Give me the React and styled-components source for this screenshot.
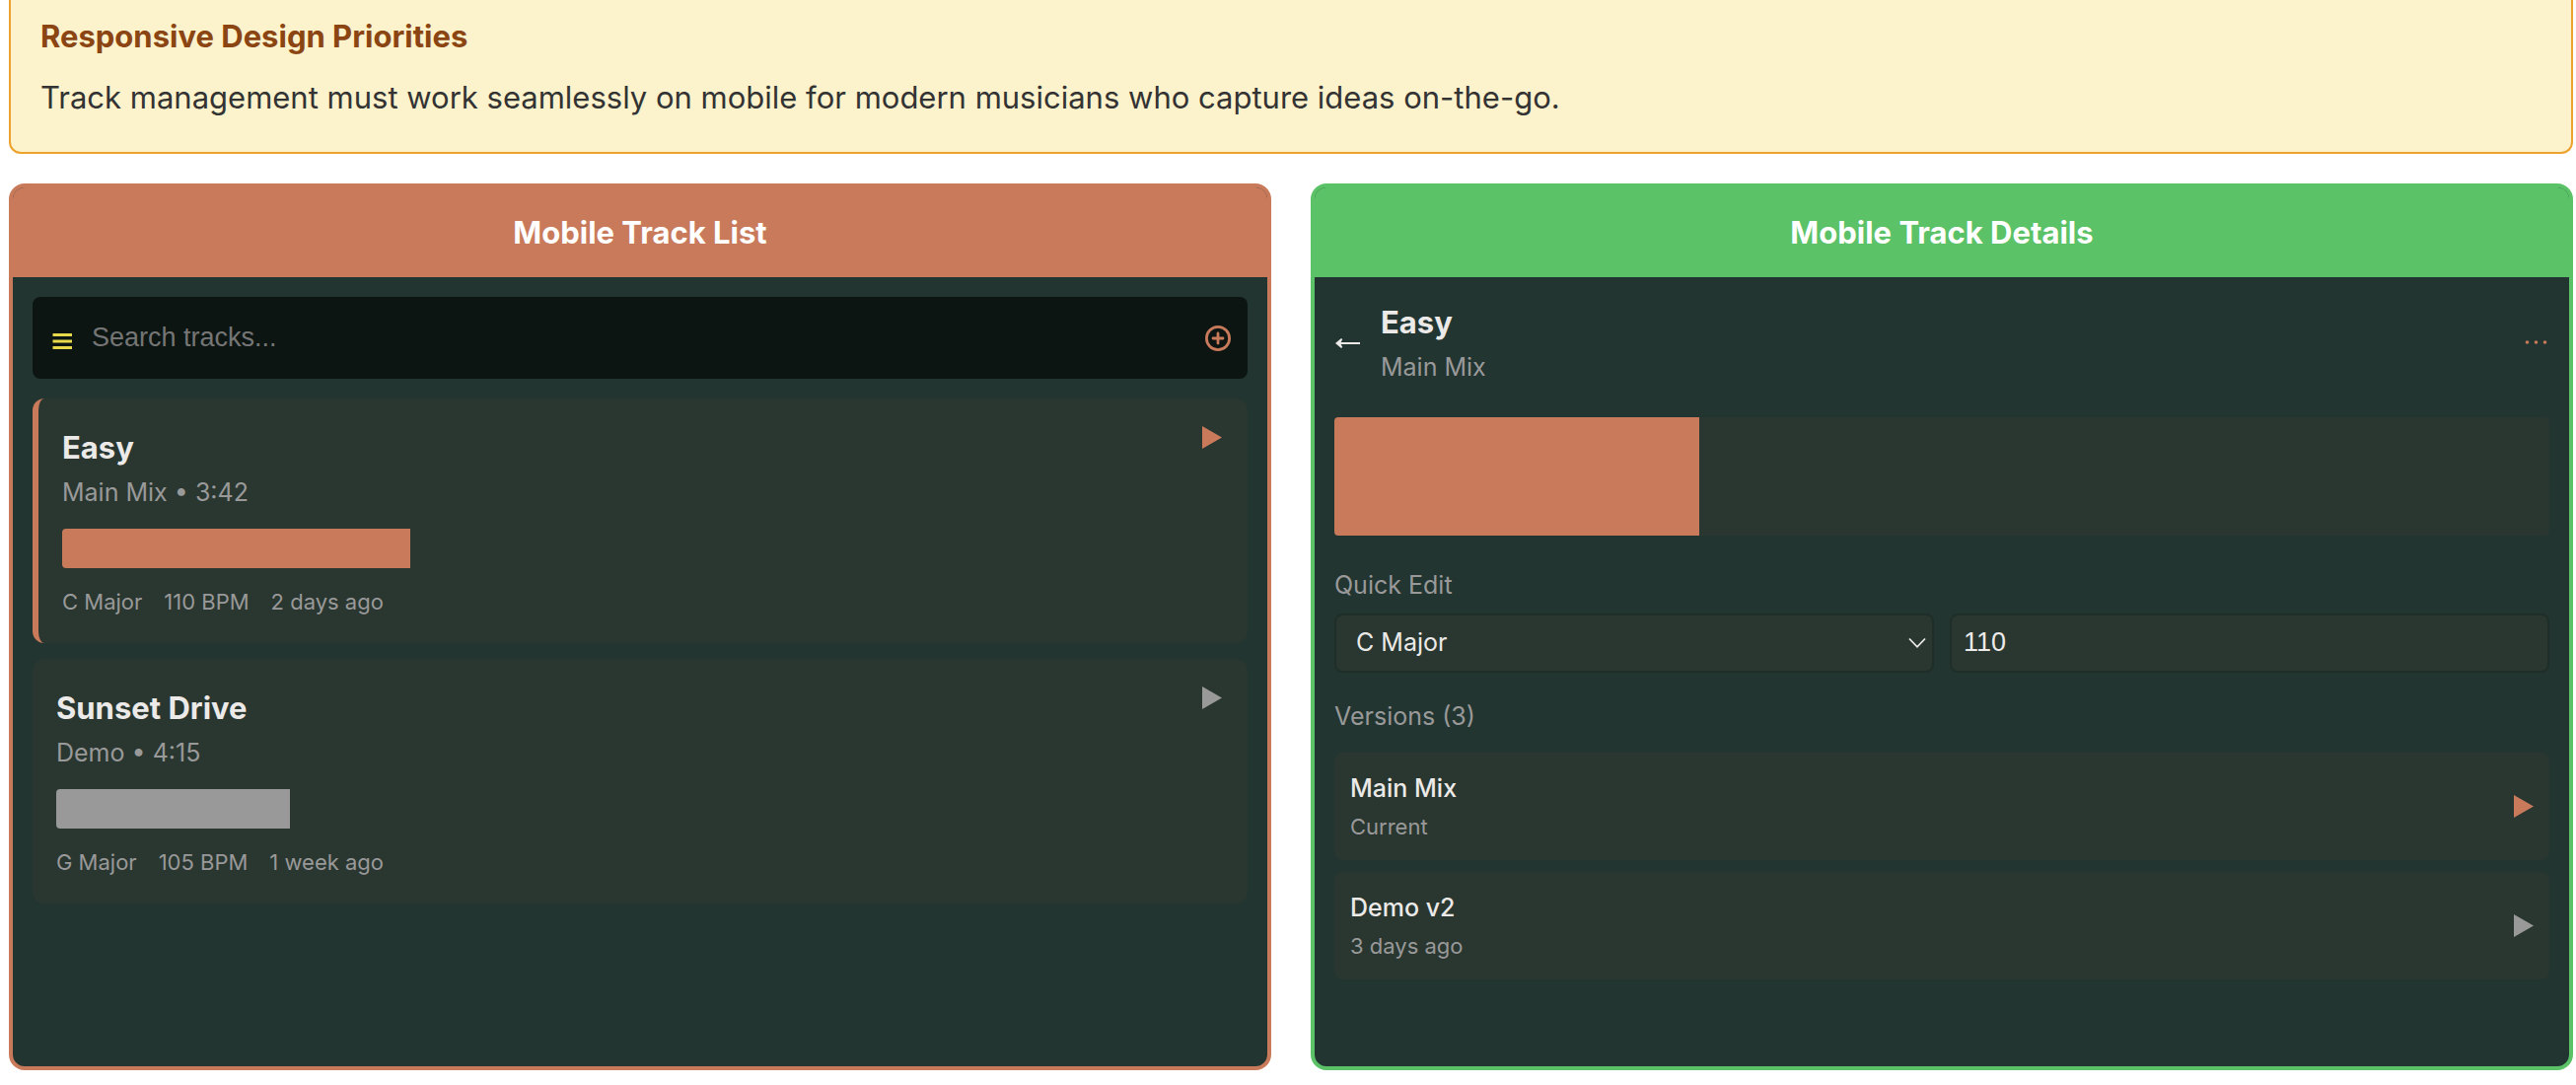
import React from "react";
import styled, { createGlobalStyle } from "styled-components";

const color = {
  accent: "#c87a5b",
  success: "#5bc267",
  panel: "#223531",
  card: "#293730",
  field: "#0c1512",
  fieldBorder: "#1f2e28",
  text: "#eceae8",
  muted: "#999999",
  highlight: "#e8d94a",
};

const GlobalStyle = createGlobalStyle`
  * {
    box-sizing: border-box;
  }

  body {
    margin: 0;
    background: #ffffff;
    color: #333333;
    font-family: Inter, "Liberation Sans", sans-serif;
    font-size: 31px;
    line-height: 51px;
  }

  h2, h3, p, ul {
    margin: 0;
    padding: 0;
  }
`;

const Page = styled.main`
  display: flex;
  flex-direction: column;
  gap: 30px;
  padding: 0 3px 12px 9px;
`;

const Callout = styled.section`
  display: flex;
  flex-direction: column;
  gap: 11px;
  padding: 11px 30px 30px;
  background: #fcf2cb;
  border: 2px solid #eda22d;
  border-top: 0;
  border-radius: 0 0 12px 12px;
`;

const CalloutTitle = styled.h2`
  color: #8b4513;
  font-size: 31px;
  font-weight: 700;
`;

const Columns = styled.div`
  display: grid;
  grid-template-columns: 1fr 1fr;
  gap: 40px;
`;

const Panel = styled.section`
  overflow: hidden;
  background: ${color.panel};
  border: 4px solid ${(p) => p.$tone};
  border-radius: 16px;
`;

const PanelTitle = styled.h2`
  padding: 20px;
  background: ${(p) => p.$tone};
  color: #ffffff;
  font-size: 31px;
  font-weight: 700;
  text-align: center;
`;

const PanelBody = styled.div`
  min-height: 800px;
  padding: 20px;
`;

const IconButton = styled.button`
  display: flex;
  flex: none;
  margin: 0;
  padding: 0;
  background: none;
  border: 0;
  color: ${(p) => p.$tone};
  cursor: pointer;

  svg {
    display: block;
  }
`;

const SearchBar = styled.div`
  display: flex;
  align-items: center;
  gap: 20px;
  height: 83px;
  margin-bottom: 20px;
  padding: 0 16px 0 20px;
  background: ${color.field};
  border-radius: 8px;
`;

const SearchInput = styled.input`
  flex: 1;
  min-width: 0;
  padding: 0 0 2px;
  background: none;
  border: 0;
  outline: 0;
  color: ${color.text};
  font-family: "Liberation Sans", sans-serif;
  font-size: 27px;
  line-height: 36px;

  &::placeholder {
    color: #757575;
    opacity: 1;
  }
`;

const TrackList = styled.ul`
  display: flex;
  flex-direction: column;
  gap: 16px;
  list-style: none;
`;

const TrackCard = styled.li`
  padding: 24px;
  background: ${color.card};
  border-left: ${(p) => (p.$active ? `6px solid ${color.accent}` : "0")};
  border-radius: 12px;
`;

const TrackTop = styled.div`
  display: flex;
  align-items: flex-start;
  justify-content: space-between;
  margin-bottom: 16px;
`;

const PlaySlot = styled.div`
  padding: 4px 2px;
`;

const Title = styled.h3`
  color: ${color.text};
  font-size: 31px;
  font-weight: 700;
  line-height: 51px;
`;

const Subtitle = styled.p`
  color: ${color.muted};
  font-size: 25px;
  line-height: 41px;
`;

const Waveform = styled.div`
  height: ${(p) => (p.$large ? "120px" : "40px")};
  margin-bottom: ${(p) => (p.$large ? "30px" : "16px")};
  overflow: hidden;
  background: ${color.card};
  border-radius: 4px;
`;

const Progress = styled.div`
  height: 100%;
  background: ${(p) => p.$tone};
`;

const Meta = styled.div`
  display: flex;
  gap: 22px;
  color: ${color.muted};
  font-size: 22px;
  line-height: 36px;
`;

const DetailHeader = styled.header`
  display: flex;
  align-items: center;
  gap: 20px;
  margin-bottom: 30px;
`;

const Heading = styled.div`
  flex: 1;
`;

const Label = styled.h3`
  color: ${color.muted};
  font-size: 25px;
  font-weight: 400;
  line-height: 41px;
`;

const EditRow = styled.div`
  display: grid;
  grid-template-columns: 1fr 1fr;
  gap: 16px;
  margin: 8px 0 24px;
`;

const SelectWrap = styled.div`
  display: grid;
  align-items: center;

  > * {
    grid-area: 1 / 1;
  }

  > svg {
    justify-self: end;
    margin-right: 8px;
    color: ${color.text};
    pointer-events: none;
  }
`;

const fieldStyle = `
  width: 100%;
  height: 60px;
  margin: 0;
  background: ${color.card};
  border: 2px solid ${color.fieldBorder};
  border-radius: 8px;
  outline: 0;
  color: ${color.text};
`;

const KeySelect = styled.select`
  ${fieldStyle}
  appearance: none;
  padding: 0 40px 2px 20px;
  font-family: Inter, sans-serif;
  font-size: 25px;
`;

const TempoInput = styled.input`
  ${fieldStyle}
  padding: 0 12px 2px;
  font-family: "Liberation Sans", sans-serif;
  font-size: 27px;
`;

const VersionList = styled.ul`
  display: flex;
  flex-direction: column;
  gap: 12px;
  margin-top: 16px;
  list-style: none;
`;

const VersionCard = styled.li`
  display: flex;
  align-items: center;
  justify-content: space-between;
  padding: 16px;
  background: ${color.card};
  border-radius: 8px;
`;

const VersionName = styled.p`
  color: ${color.text};
  font-size: 25px;
  font-weight: 500;
  line-height: 41px;
`;

const VersionMeta = styled.p`
  color: ${color.muted};
  font-size: 22px;
  line-height: 36px;
`;

const MenuIcon = () => (
  <svg width="20" height="26" viewBox="0 0 20 26" fill="currentColor" aria-hidden="true">
    <rect x="0.5" y="8" width="19.5" height="3" />
    <rect x="0.5" y="14.5" width="19.5" height="3" />
    <rect x="0.5" y="21" width="19.5" height="3" />
  </svg>
);

const AddIcon = () => (
  <svg width="28" height="28" viewBox="0 0 28 28" fill="none" stroke="currentColor" strokeWidth="2.8" aria-hidden="true">
    <circle cx="14" cy="14" r="11.6" />
    <path d="M14 9v10M9 14h10" strokeLinecap="round" />
  </svg>
);

const PlayIcon = () => (
  <svg width="20" height="23" viewBox="0 0 20 23" fill="currentColor" aria-hidden="true">
    <path d="M0 0L20 11.5L0 23Z" />
  </svg>
);

const BackIcon = () => (
  <svg width="27" height="12" viewBox="0 0 27 12" fill="none" stroke="currentColor" aria-hidden="true">
    <path d="M5 7H26" strokeWidth="2" />
    <path d="M1 7L7 2L8.2 3L6.2 7L8.2 11L7 12Z" fill="currentColor" stroke="none" />
  </svg>
);

const MoreIcon = () => (
  <svg width="26" height="5" viewBox="0 0 26 5" fill="currentColor" aria-hidden="true">
    <circle cx="3.5" cy="2" r="1.8" />
    <circle cx="12.5" cy="2" r="1.8" />
    <circle cx="21.5" cy="2" r="1.8" />
  </svg>
);

const ChevronIcon = () => (
  <svg width="18" height="12" viewBox="0 0 18 12" fill="none" stroke="currentColor" strokeWidth="1.8" aria-hidden="true">
    <path d="M1 1.5L9 9.8L17 1.5" />
  </svg>
);

const tracks = [
  {
    title: "Easy",
    version: "Main Mix • 3:42",
    progress: 30,
    meta: ["C Major", "110 BPM", "2 days ago"],
    active: true,
  },
  {
    title: "Sunset Drive",
    version: "Demo • 4:15",
    progress: 20,
    meta: ["G Major", "105 BPM", "1 week ago"],
    active: false,
  },
];

const versions = [
  { name: "Main Mix", note: "Current", active: true },
  { name: "Demo v2", note: "3 days ago", active: false },
];

const toneOf = (item) => (item.active ? color.accent : color.muted);

function TrackListPanel() {
  return (
    <Panel $tone={color.accent}>
      <PanelTitle $tone={color.accent}>Mobile Track List</PanelTitle>
      <PanelBody>
        <SearchBar>
          <IconButton $tone={color.highlight} aria-label="Menu">
            <MenuIcon />
          </IconButton>
          <SearchInput type="text" placeholder="Search tracks..." aria-label="Search tracks" />
          <IconButton $tone={color.accent} aria-label="Add track">
            <AddIcon />
          </IconButton>
        </SearchBar>
        <TrackList>
          {tracks.map((track) => (
            <TrackCard key={track.title} $active={track.active}>
              <TrackTop>
                <div>
                  <Title>{track.title}</Title>
                  <Subtitle>{track.version}</Subtitle>
                </div>
                <PlaySlot>
                  <IconButton $tone={toneOf(track)} aria-label={`Play ${track.title}`}>
                    <PlayIcon />
                  </IconButton>
                </PlaySlot>
              </TrackTop>
              <Waveform>
                <Progress $tone={toneOf(track)} style={{ width: `${track.progress}%` }} />
              </Waveform>
              <Meta>
                {track.meta.map((item) => (
                  <span key={item}>{item}</span>
                ))}
              </Meta>
            </TrackCard>
          ))}
        </TrackList>
      </PanelBody>
    </Panel>
  );
}

function TrackDetailsPanel() {
  return (
    <Panel $tone={color.success}>
      <PanelTitle $tone={color.success}>Mobile Track Details</PanelTitle>
      <PanelBody>
        <DetailHeader>
          <IconButton $tone={color.text} aria-label="Back">
            <BackIcon />
          </IconButton>
          <Heading>
            <Title>Easy</Title>
            <Subtitle>Main Mix</Subtitle>
          </Heading>
          <IconButton $tone={color.accent} aria-label="More options">
            <MoreIcon />
          </IconButton>
        </DetailHeader>
        <Waveform $large>
          <Progress $tone={color.accent} style={{ width: "30%" }} />
        </Waveform>
        <Label>Quick Edit</Label>
        <EditRow>
          <SelectWrap>
            <KeySelect aria-label="Key" defaultValue="C Major">
              <option>C Major</option>
              <option>G Major</option>
            </KeySelect>
            <ChevronIcon />
          </SelectWrap>
          <TempoInput type="text" inputMode="numeric" aria-label="Tempo in BPM" defaultValue="110" />
        </EditRow>
        <Label>Versions (3)</Label>
        <VersionList>
          {versions.map((version) => (
            <VersionCard key={version.name}>
              <div>
                <VersionName>{version.name}</VersionName>
                <VersionMeta>{version.note}</VersionMeta>
              </div>
              <IconButton $tone={toneOf(version)} aria-label={`Play ${version.name}`}>
                <PlayIcon />
              </IconButton>
            </VersionCard>
          ))}
        </VersionList>
      </PanelBody>
    </Panel>
  );
}

export default function App() {
  return (
    <>
      <GlobalStyle />
      <Page>
        <Callout>
          <CalloutTitle>Responsive Design Priorities</CalloutTitle>
          <p>Track management must work seamlessly on mobile for modern musicians who capture ideas on-the-go.</p>
        </Callout>
        <Columns>
          <TrackListPanel />
          <TrackDetailsPanel />
        </Columns>
      </Page>
    </>
  );
}
